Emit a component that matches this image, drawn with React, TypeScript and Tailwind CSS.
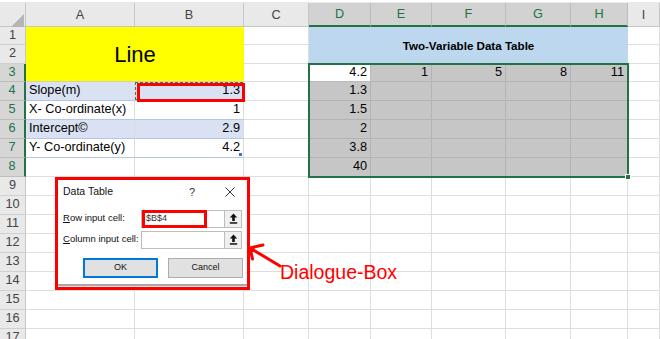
import React from 'react';

const COLS = ['A', 'B', 'C', 'D', 'E', 'F', 'G', 'H', 'I'];
const SEL_COLS = new Set(['D', 'E', 'F', 'G', 'H']);
const ROWS = Array.from({ length: 17 }, (_, i) => i + 1);

const DATA: Record<string, string> = {
  D3: '4.2', E3: '1', F3: '5', G3: '8', H3: '11',
  D4: '1.3', D5: '1.5', D6: '2', D7: '3.8', D8: '40',
  A4: 'Slope(m)', B4: '1.3',
  A5: 'X- Co-ordinate(x)', B5: '1',
  A6: 'Intercept©', B6: '2.9',
  A7: 'Y- Co-ordinate(y)', B7: '4.2',
};

function covered(c: string, r: number) {
  if ((c === 'A' || c === 'B') && r <= 3 && !(c === 'A' && r === 1)) return true;
  if (SEL_COLS.has(c) && r <= 2 && !(c === 'D' && r === 1)) return true;
  return false;
}

function cellClass(c: string, r: number) {
  const ci = COLS.indexOf(c);
  if (SEL_COLS.has(c) && r >= 3 && r <= 8) {
    if (c === 'D' && r === 3) return 'bg-white border-r border-b border-[#b9b9b9] justify-end';
    return 'bg-[#c6c6c6] border-r border-b border-[#b3b3b3] justify-end';
  }
  if (ci <= 1 && r >= 4 && r <= 7) {
    const banded = r % 2 === 0;
    if (c === 'A') return banded ? 'bg-[#d9e1f2] border-r border-r-[#dcdcdc] border-b border-b-[#b4c6e7] justify-start' : 'bg-white border-r border-r-[#dcdcdc] border-b border-b-[#b4c6e7] justify-start';
    return banded ? 'bg-[#d9e1f2] border-r border-r-[#dcdcdc] border-b border-b-[#b4c6e7] justify-end' : 'bg-white border-r border-r-[#dcdcdc] border-b border-b-[#b4c6e7] justify-end';
  }
  return 'bg-white border-r border-b border-[#dedede] justify-start';
}

function UploadIcon() {
  return (
    <svg width="9" height="11" viewBox="0 0 9 11">
      <path d="M4.5 0.5 L0.8 4.5 H3.2 V8 H5.8 V4.5 H8.2 Z" fill="#111" />
      <rect x="0.8" y="9.2" width="7.4" height="1.5" fill="#111" />
    </svg>
  );
}

export default function App() {
  const cells: React.ReactNode[] = [];
  cells.push(
    <div key="corner" className="relative bg-[#e9e9e9] border-r border-b border-[#c6c6c6]">
      <svg className="absolute left-[11px] top-[11px]" width="14" height="14" viewBox="0 0 14 14">
        <path d="M13 0 V13 H0 Z" fill="#b5b5b5" />
      </svg>
    </div>
  );
  COLS.forEach((c) => {
    const sel = SEL_COLS.has(c);
    cells.push(
      <div
        key={'h' + c}
        className={
          sel
            ? 'flex items-center justify-center bg-[#d2d2d2] text-[#217346] border-r border-r-[#bdbdbd] border-b-2 border-b-[#217346] pt-[2px]'
            : 'flex items-center justify-center bg-[#e9e9e9] text-[#444] border-r border-r-[#c6c6c6] border-b border-b-[#c6c6c6] pt-[2px]'
        }
      >
        {c}
      </div>
    );
  });

  ROWS.forEach((r) => {
    const sel = r >= 3 && r <= 8;
    cells.push(
      <div
        key={'r' + r}
        className={
          sel
            ? 'flex items-center justify-center bg-[#d6d6d6] text-[#217346] border-r-2 border-r-[#217346] border-b border-b-[#bdbdbd]'
            : 'flex items-center justify-center bg-[#e9e9e9] text-[#444] border-r border-r-[#c6c6c6] border-b border-b-[#d0d0d0]'
        }
      >
        {r}
      </div>
    );
    COLS.forEach((c) => {
      if (covered(c, r)) return;
      if (c === 'A' && r === 1) {
        cells.push(
          <div key="A1" className="col-span-2 row-span-3 flex items-center justify-center bg-[#ffff00] border-b border-b-[#d4d4a0] text-[22px] text-black">
            Line
          </div>
        );
        return;
      }
      if (c === 'D' && r === 1) {
        cells.push(
          <div key="D1" className="col-span-5 row-span-2 flex items-center justify-center bg-[#bdd7ee] text-[11.6px] font-bold text-black">
            Two-Variable Data Table
          </div>
        );
        return;
      }
      const key = c + r;
      cells.push(
        <div key={key} className={'relative flex items-center px-[3px] whitespace-nowrap overflow-hidden text-black ' + cellClass(c, r)}>
          {DATA[key] ?? ''}
          {key === 'B4' && <div className="absolute inset-0 border border-dashed border-[#3a7a5a]" />}
          {key === 'B7' && <div className="absolute right-[1px] bottom-[1px] w-[3px] h-[3px] bg-[#4472c4]" />}
        </div>
      );
    });
  });

  return (
    <div className="relative w-[660px] h-[339px] overflow-hidden bg-white text-[12.7px] text-[#111]" style={{ fontFamily: '"Liberation Sans", Arial, sans-serif' }}>
      <div className="h-[3px] bg-[#e9e9e9] border-t-2 border-t-white" />
      <div className="grid grid-cols-[26px_109px_109px_65px_62px_61px_74px_65px_57px_32px] grid-rows-[24px_18px_19px_18px_repeat(14,19px)]">
        {cells}
      </div>

      {/* selection box D3:H8 */}
      <div className="absolute left-[308px] top-[63px] w-[321px] h-[115px] border-2 border-[#217346]" />
      <div className="absolute left-[625px] top-[174px] w-[6px] h-[6px] bg-[#217346] border border-white" />

      {/* red box on B4 */}
      <div className="absolute left-[137px] top-[83px] w-[108px] h-[19px] border-[3px] border-[#ff0000]" />

      {/* dialog */}
      <div className="absolute left-[58px] top-[180px] w-[189px] h-[106px] bg-white border-b-2 border-b-[#a8a8a8] shadow-[0_0_4px_rgba(0,0,0,0.25)] text-[9.5px] text-[#111]">
        <div className="flex items-center h-[22px] pl-[5px] pt-[2px]">
          <span className="text-[10.5px]">Data Table</span>
          <span className="ml-[76px] text-[11px] text-[#333]">?</span>
          <svg className="ml-[30px]" width="10" height="10" viewBox="0 0 10 10">
            <path d="M0.5 0.5 L9.5 9.5 M9.5 0.5 L0.5 9.5" stroke="#333" strokeWidth="1" />
          </svg>
        </div>
        <div className="flex items-center h-[19px] mt-[7px] pl-[5px]">
          <span className="w-[78px]">
            <span className="underline">R</span>ow input cell:
          </span>
          <div className="flex items-center w-[84px] h-[18px] border border-[#bdbdbd] pl-[4px] text-[9px] text-[#333]">$B$4</div>
          <div className="flex items-center justify-center w-[17px] h-[18px] border border-l-0 border-[#bdbdbd] bg-[#f0f0f0]">
            <UploadIcon />
          </div>
        </div>
        <div className="flex items-center h-[19px] mt-[2px] pl-[5px]">
          <span className="w-[78px]">
            <span className="underline">C</span>olumn input cell:
          </span>
          <div className="w-[84px] h-[18px] border border-[#bdbdbd] bg-white" />
          <div className="flex items-center justify-center w-[17px] h-[18px] border border-l-0 border-[#bdbdbd] bg-[#f0f0f0]">
            <UploadIcon />
          </div>
        </div>
        <div className="flex items-center mt-[9px] pl-[25px] gap-[10px]">
          <div className="flex items-center justify-center w-[75px] h-[20px] bg-[#e1e1e1] border-2 border-[#0078d7] text-[9px]">OK</div>
          <div className="flex items-center justify-center w-[75px] h-[20px] bg-[#e1e1e1] border border-[#adadad] text-[9px]">Cancel</div>
        </div>
      </div>
      <div className="absolute left-[142px] top-[210px] w-[65px] h-[18px] border-[3px] border-[#ff0000]" />
      <div className="absolute left-[55px] top-[177px] w-[195px] h-[113px] border-[3px] border-[#ff0000]" />

      {/* arrow + label */}
      <svg className="absolute left-[240px] top-[238px]" width="48" height="36" viewBox="0 0 48 36">
        <path d="M10 10 L40 28 M10 10 L23 7 M10 10 L12.5 21" stroke="#ff0000" strokeWidth="3" strokeLinecap="round" fill="none" />
      </svg>
      <div className="absolute left-[280px] top-[263px] text-[19.5px] leading-none text-[#ff0000]">Dialogue-Box</div>
    </div>
  );
}
